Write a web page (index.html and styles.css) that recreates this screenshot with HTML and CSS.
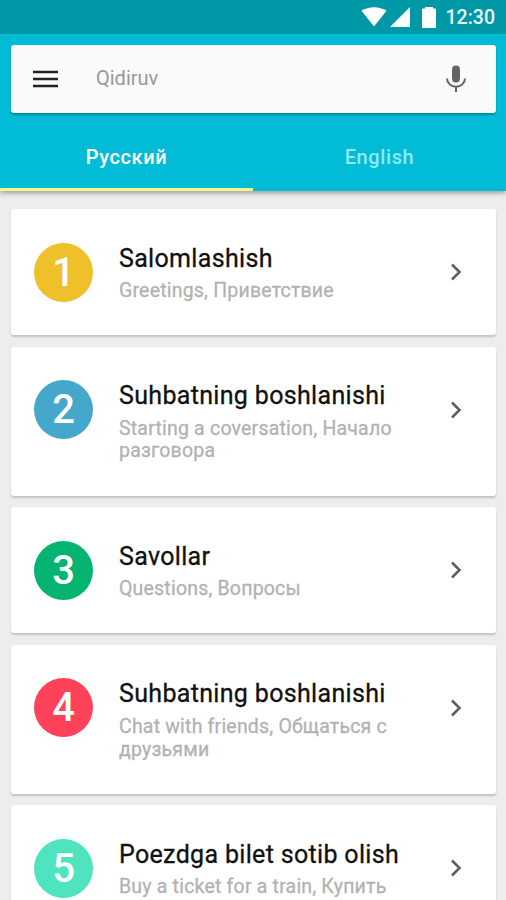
FILE: index.html
```html
<!DOCTYPE html>
<html lang="uz">
<head>
  <meta charset="UTF-8">
  <meta name="viewport" content="width=device-width, initial-scale=1.0">
  <title>Qidiruv</title>
  <link rel="stylesheet" href="styles.css">
</head>
<body>
  <header class="header">
    <div class="status-bar">
      <svg class="wifi" width="26" height="20" viewBox="0 0 26 20"><path d="M0.5 3.8C7.5-1 18.500-1 25.500 3.800L13 19.500z"/></svg>
      <svg class="signal" width="20" height="20" viewBox="0 0 20 20"><path d="M20 0v20H0z"/></svg>
      <svg class="battery" width="14" height="21" viewBox="0 0 14 21"><path d="M3 0h8v1.500h2q1 0 1 1V20q0 1-1 1H1q-1 0-1-1V2.500q0-1 1-1h2z"/></svg>
      <span class="clock">12:30</span>
    </div>
    <div class="search">
      <button class="icon-button">
        <svg width="26" height="18" viewBox="0 0 26 18"><path d="M0 2h25M0 9h25M0 16h25" stroke="#222" stroke-width="2.600"/></svg>
      </button>
      <span class="placeholder">Qidiruv</span>
      <button class="icon-button">
        <svg width="20" height="28" viewBox="0 0 20 28"><rect x="6" y="0.500" width="8" height="17" rx="4" fill="#646464"/><path d="M1 13.500a9 8.300 0 0 0 18 0M10 21.800V27" fill="none" stroke="#646464" stroke-width="2"/></svg>
      </button>
    </div>
    <nav class="tabs">
      <a class="tab active">Русский</a>
      <a class="tab">English</a>
    </nav>
  </header>

  <main class="list">
    <div class="card">
      <div class="number yellow">1</div>
      <div class="text">
        <div class="title">Salomlashish</div>
        <div class="subtitle">Greetings, Приветствие</div>
      </div>
      <svg class="arrow" width="12" height="18" viewBox="0 0 12 18"><path d="M2 1.500L9.500 9L2 16.500"/></svg>
    </div>
    <div class="card">
      <div class="number blue">2</div>
      <div class="text">
        <div class="title">Suhbatning boshlanishi</div>
        <div class="subtitle">Starting a coversation, Начало разговора</div>
      </div>
      <svg class="arrow" width="12" height="18" viewBox="0 0 12 18"><path d="M2 1.500L9.500 9L2 16.500"/></svg>
    </div>
    <div class="card">
      <div class="number green">3</div>
      <div class="text">
        <div class="title">Savollar</div>
        <div class="subtitle">Questions, Вопросы</div>
      </div>
      <svg class="arrow" width="12" height="18" viewBox="0 0 12 18"><path d="M2 1.500L9.500 9L2 16.500"/></svg>
    </div>
    <div class="card">
      <div class="number red">4</div>
      <div class="text">
        <div class="title">Suhbatning boshlanishi</div>
        <div class="subtitle">Chat with friends, Общаться с друзьями</div>
      </div>
      <svg class="arrow" width="12" height="18" viewBox="0 0 12 18"><path d="M2 1.500L9.500 9L2 16.500"/></svg>
    </div>
    <div class="card">
      <div class="number mint">5</div>
      <div class="text">
        <div class="title">Poezdga bilet sotib olish</div>
        <div class="subtitle">Buy a ticket for a train, Купить</div>
      </div>
      <svg class="arrow" width="12" height="18" viewBox="0 0 12 18"><path d="M2 1.500L9.500 9L2 16.500"/></svg>
    </div>
  </main>
</body>
</html>
```
FILE: styles.css
```css
* {
  box-sizing: border-box;
}

body {
  margin: 0;
  height: 100vh;
  overflow: hidden;
  background-color: #ededed;
  font-family: Roboto, sans-serif;
}

.header {
  height: 191px;
  background-color: #02bbd6;
  box-shadow: 0 2px 5px rgba(0, 0, 0, 0.35);
}

.status-bar {
  display: flex;
  align-items: center;
  justify-content: flex-end;
  height: 34px;
  padding-right: 11px;
  background-color: #0097a7;
  color: #e8f8fa;
  fill: #fff;
}

.signal {
  margin-left: 3px;
}

.battery {
  margin-left: 12px;
}

.clock {
  margin-left: 10px;
  font-size: 19.5px;
  font-weight: 500;
  line-height: 35px;
}

.search {
  display: flex;
  align-items: center;
  height: 68px;
  margin: 11px 10px 0 11px;
  padding: 0 30px 0 22px;
  background-color: #fafafa;
  border-radius: 3px;
  box-shadow: 0 2px 2px rgba(0, 0, 0, 0.25);
}

.icon-button {
  display: flex;
  padding: 0;
  border: none;
  background: none;
  cursor: pointer;
}

.placeholder {
  flex: 1;
  margin: -2px 0 0 37px;
  color: #999;
  font-size: 20px;
  line-height: 24px;
}

.tabs {
  display: flex;
  height: 78px;
}

.tab {
  flex: 1;
  padding-top: 11px;
  color: #8cebf5;
  font-size: 20px;
  font-weight: 500;
  letter-spacing: 0.6px;
  line-height: 67px;
  text-align: center;
}

.tab.active {
  border-bottom: 3px solid #f4f58c;
  color: #fff;
}

.list {
  display: flex;
  flex-direction: column;
  gap: 11.5px;
  padding: 18px 10px 0 11px;
}

.card {
  display: flex;
  align-items: flex-start;
  flex-shrink: 0;
  padding: 33.5px 34px 32.5px 23px;
  background-color: #fff;
  border-radius: 3px;
  box-shadow: 0 2px 2px rgba(0, 0, 0, 0.18);
}

.number {
  width: 59px;
  height: 59px;
  border-radius: 50%;
  color: #fff;
  font-size: 40px;
  font-weight: 500;
  line-height: 60px;
  text-align: center;
}

.yellow {
  background-color: #efc02a;
}

.blue {
  background-color: #45a7c9;
}

.green {
  background-color: #06b471;
}

.red {
  background-color: #ff4259;
}

.mint {
  background-color: #4de4bf;
}

.text {
  flex: 1;
  margin-left: 26px;
  padding-right: 40px;
}

.title {
  color: #111;
  font-size: 25px;
  letter-spacing: 0.33px;
  line-height: 31px;
  white-space: nowrap;
  -webkit-text-stroke: 0.3px;
}

.subtitle {
  margin-top: 6.5px;
  color: #b2b2b2;
  font-size: 19.5px;
  letter-spacing: 0.2px;
  line-height: 22.7px;
  -webkit-text-stroke: 0.3px;
}

.arrow {
  margin-top: 20.5px;
  fill: none;
  stroke: #606060;
  stroke-width: 2.600;
}
```
